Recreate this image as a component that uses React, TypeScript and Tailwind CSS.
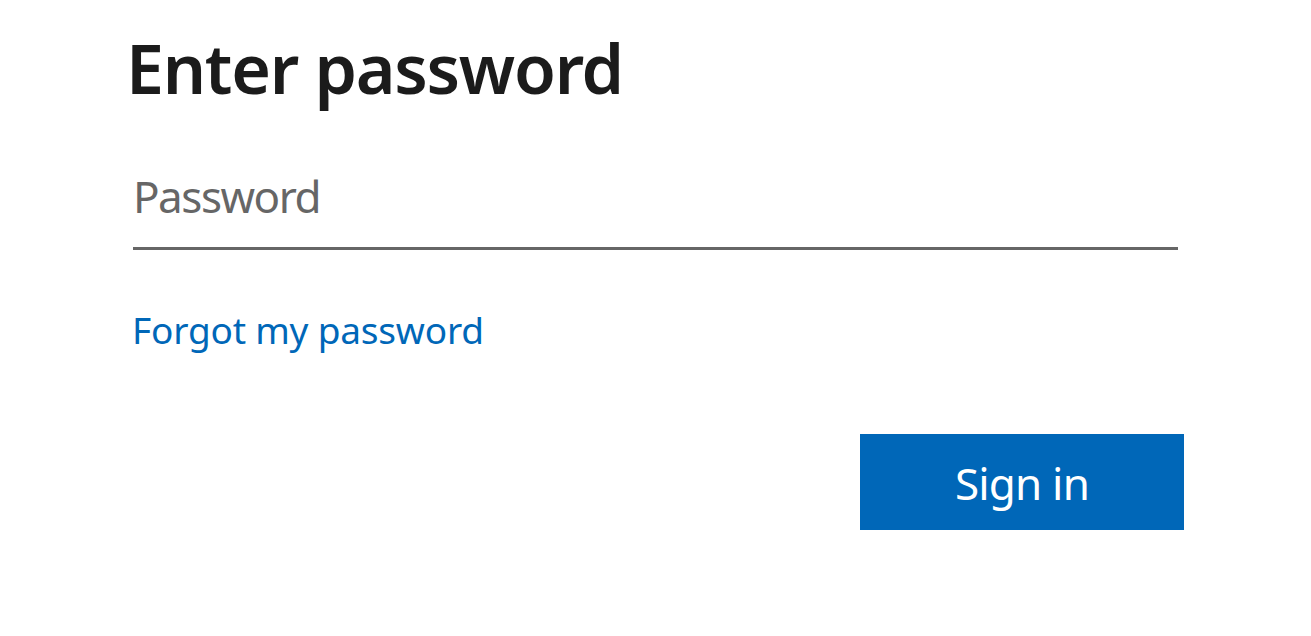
export default function App() {
  return (
    <div className="min-h-[636px] w-full bg-white font-['Noto_Sans',sans-serif]">
      <div className="ml-[128px] w-[1056px] pt-[22px]">
        <h1 className="-ml-[2px] text-[68px] leading-[92px] font-semibold tracking-[-1.25px] text-[#1b1b1b]">
          Enter password
        </h1>

        <div className="ml-[5px] mt-[52px] w-[1045px] border-b-[3px] border-[#666666] pb-[21px]">
          <input
            type="password"
            placeholder="Password"
            className="w-full bg-transparent text-[44px] leading-[60px] tracking-[-1.5px] text-[#1b1b1b] outline-none placeholder:text-[#666666]"
          />
        </div>

        <div className="ml-[4px] mt-[54px]">
          <a href="#" className="text-[37px] leading-[52px] tracking-[-0.2px] text-[#0067b8]">
            Forgot my password
          </a>
        </div>

        <div className="mt-[78px] flex justify-end">
          <button
            type="button"
            className="h-[96px] w-[324px] bg-[#0067b8] pt-[2px] text-[44px] tracking-[-0.8px] text-white"
          >
            Sign in
          </button>
        </div>
      </div>
    </div>
  );
}
